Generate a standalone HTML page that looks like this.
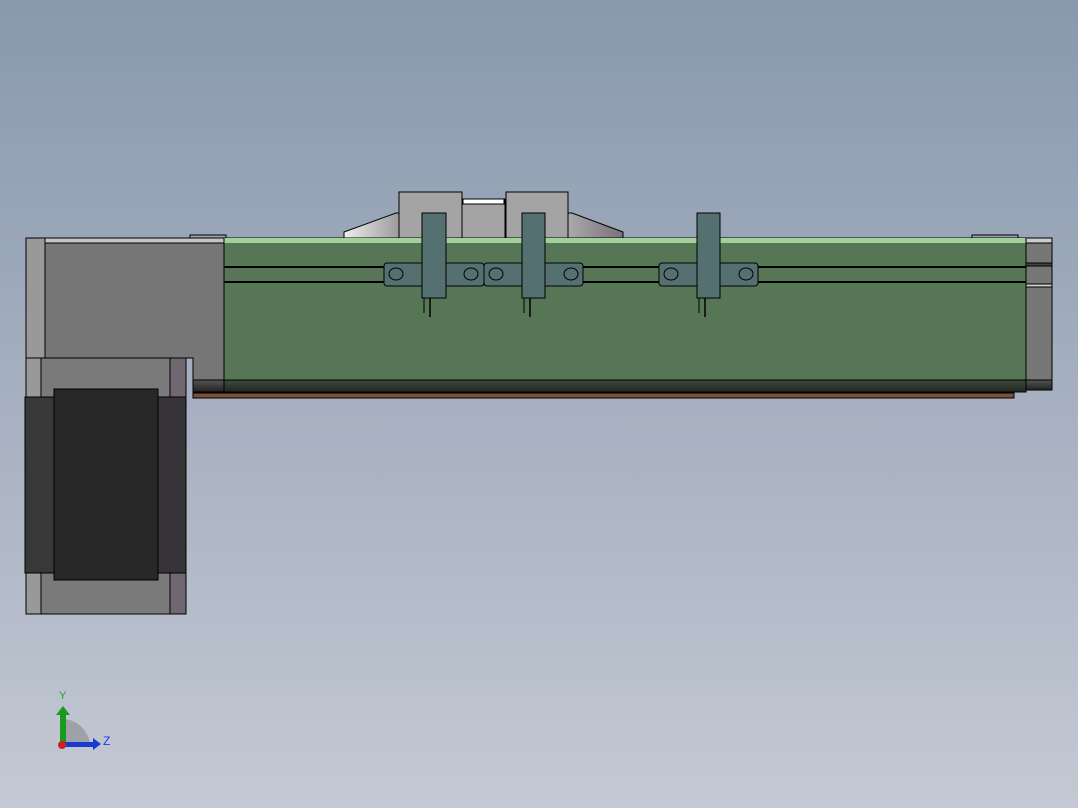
<!DOCTYPE html>
<html><head><meta charset="utf-8"><style>html,body{margin:0;padding:0;width:1078px;height:808px;overflow:hidden}</style></head><body>
<svg width="1078" height="808" viewBox="0 0 1078 808" xmlns="http://www.w3.org/2000/svg" style="display:block">
<defs>
<linearGradient id="bg" x1="0" y1="0" x2="0" y2="1"><stop offset="0" stop-color="#8899ae"/><stop offset="0.5" stop-color="#a6b0c0"/><stop offset="1" stop-color="#c4c9d4"/></linearGradient>
<linearGradient id="dk" x1="0" y1="0" x2="0" y2="1"><stop offset="0" stop-color="#3c4a3c"/><stop offset="1" stop-color="#1e2a1e"/></linearGradient>
<linearGradient id="dkg" x1="0" y1="0" x2="0" y2="1"><stop offset="0" stop-color="#555"/><stop offset="1" stop-color="#222"/></linearGradient>
<linearGradient id="wl" x1="0" y1="0" x2="1" y2="0"><stop offset="0" stop-color="#eee"/><stop offset="1" stop-color="#999"/></linearGradient>
<linearGradient id="wr" x1="0" y1="0" x2="1" y2="0"><stop offset="0" stop-color="#aaa"/><stop offset="1" stop-color="#7a707a"/></linearGradient>
</defs>
<rect width="1078" height="808" fill="url(#bg)"/>
<g stroke="#000" stroke-width="1">
<!-- top tabs -->
<rect x="190" y="235" width="36" height="4" fill="#9aa0b0"/>
<rect x="972" y="235" width="46" height="4" fill="#9aa0b0"/>
<!-- carriage -->
<path d="M344 232 L396 213 L400 213 L400 238 L344 238 Z" fill="url(#wl)"/>
<path d="M568 213 L572 213 L623 232 L623 238 L568 238 Z" fill="url(#wr)"/>
<rect x="399" y="192" width="63" height="46" fill="#a4a4a4"/>
<rect x="506" y="192" width="62" height="46" fill="#a4a4a4"/>
<path d="M462 199 L505 199 L505 238 L503 241 L464 241 L462 238 Z" fill="#a4a4a4"/>
<rect x="463" y="199" width="41" height="5" fill="#fff"/>
<!-- rail -->
<rect x="224" y="238" width="802" height="154" fill="#577655"/>
<rect x="224" y="238" width="802" height="5" fill="#a2d09a" stroke="none"/>
<rect x="224" y="380" width="802" height="12" fill="url(#dk)"/>
<line x1="224" y1="267" x2="1026" y2="267" stroke-width="2"/>
<line x1="224" y1="282" x2="1026" y2="282" stroke-width="2"/>
<rect x="193" y="393" width="821" height="5" fill="#7a5038"/>
<!-- housing -->
<path d="M26 238 L224 238 L224 392 L193 392 L193 358 L26 358 Z" fill="#767676"/>
<rect x="26" y="238" width="19" height="120" fill="#999"/>
<rect x="45" y="238" width="179" height="5" fill="#c4c4c4"/>
<rect x="193" y="380" width="31" height="12" fill="url(#dkg)"/>
<!-- right cap -->
<rect x="1026" y="238" width="26" height="152" fill="#777"/>
<rect x="1026" y="238" width="26" height="5" fill="#ccc"/>
<rect x="1026" y="263" width="26" height="3" fill="#444"/>
<rect x="1026" y="284" width="26" height="3" fill="#ccc"/>
<rect x="1026" y="380" width="26" height="10" fill="url(#dkg)"/>
<!-- motor -->
<rect x="26" y="358" width="160" height="256" fill="#7a7a7a"/>
<rect x="26" y="358" width="15" height="256" fill="#999"/>
<rect x="170" y="358" width="16" height="256" fill="#706870"/>
<rect x="25" y="397" width="161" height="176" fill="#383838"/>
<rect x="158" y="397" width="28" height="176" fill="#363438"/>
<rect x="54" y="389" width="104" height="191" fill="#282828"/>
<!-- link plates -->
<rect x="384" y="263" width="100" height="23" rx="3" fill="#557070"/>
<rect x="484" y="263" width="99" height="23" rx="3" fill="#557070"/>
<rect x="659" y="263" width="99" height="23" rx="3" fill="#557070"/>
<ellipse cx="396" cy="274" rx="7" ry="6" fill="#557070"/>
<ellipse cx="471" cy="274" rx="7" ry="6" fill="#557070"/>
<ellipse cx="496" cy="274" rx="7" ry="6" fill="#557070"/>
<ellipse cx="571" cy="274" rx="7" ry="6" fill="#557070"/>
<ellipse cx="671" cy="274" rx="7" ry="6" fill="#557070"/>
<ellipse cx="746" cy="274" rx="7" ry="6" fill="#557070"/>
<!-- sensors -->
<rect x="422" y="213" width="24" height="85" fill="#557070"/>
<rect x="522" y="213" width="23" height="85" fill="#557070"/>
<rect x="697" y="213" width="23" height="85" fill="#557070"/>
<line x1="424" y1="298" x2="424" y2="313"/><line x1="430" y1="298" x2="430" y2="317" stroke-width="1.5"/>
<line x1="524" y1="298" x2="524" y2="313"/><line x1="530" y1="298" x2="530" y2="317" stroke-width="1.5"/>
<line x1="699" y1="298" x2="699" y2="313"/><line x1="705" y1="298" x2="705" y2="317" stroke-width="1.5"/>
</g>
<!-- triad -->
<path d="M62 745 L62 719 A28 28 0 0 1 90 745 Z" fill="#a0a0a8"/>
<rect x="60" y="713" width="6" height="32" fill="#1a9a1a"/>
<path d="M56 715 L63 706 L70 715 Z" fill="#1a9a1a"/>
<rect x="62" y="742" width="32" height="5" fill="#1a3acc"/>
<path d="M93 738 L101 744 L93 750 Z" fill="#1a3acc"/>
<circle cx="62" cy="745" r="4" fill="#d02020"/>
<text x="59" y="699" font-family="Liberation Sans, sans-serif" font-size="11" fill="#1aaa1a">Y</text>
<text x="103" y="745" font-family="Liberation Sans, sans-serif" font-size="12" fill="#1a3aee">Z</text>
</svg>
</body></html>
